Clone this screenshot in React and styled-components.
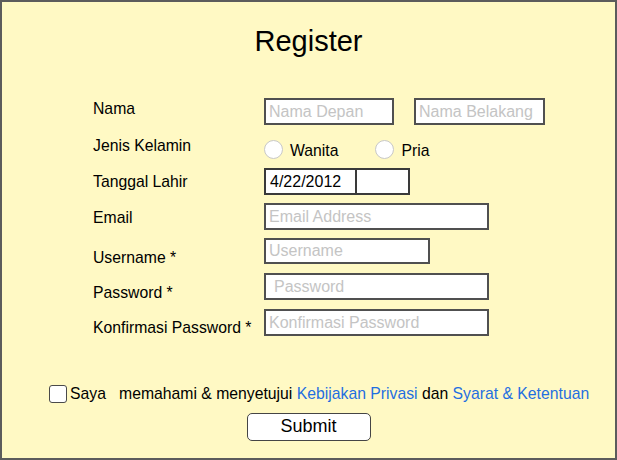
import React from "react";
import styled, { createGlobalStyle } from "styled-components";

const GlobalStyle = createGlobalStyle`
  body {
    margin: 0;
    font-family: "Liberation Sans", Arial, sans-serif;
    color: #000;
  }
`;

function App() {
  return (
    <>
      <GlobalStyle />
      <Frame>
        <Title>Register</Title>
        <Form>
          <LabelCol>
            <Label offset={2}>Nama</Label>
            <Label offset={19}>Jenis Kelamin</Label>
            <Label offset={18}>Tanggal Lahir</Label>
            <Label offset={18}>Email</Label>
            <Label offset={22}>Username *</Label>
            <Label offset={17}>Password *</Label>
            <Label offset={17}>Konfirmasi Password *</Label>
          </LabelCol>
          <ControlCol>
            <NameRow>
              <Field width={130} placeholder="Nama Depan" />
              <Field width={131} placeholder="Nama Belakang" />
            </NameRow>
            <RadioRow>
              <RadioOption>
                <Radio />
                Wanita
              </RadioOption>
              <RadioOption>
                <Radio />
                Pria
              </RadioOption>
            </RadioRow>
            <DateBox>
              <DateValue>4/22/2012</DateValue>
              <DateButton />
            </DateBox>
            <Field gap={8} width={225} placeholder="Email Address" />
            <Field gap={8} width={166} height={26} placeholder="Username" />
            <Field gap={9} width={225} indent={8} placeholder="Password" />
            <Field gap={9} width={225} placeholder="Konfirmasi Password" />
          </ControlCol>
        </Form>
        <Agreement>
          <CheckBox />
          <AgreeText>
            {"Saya   memahami & menyetujui "}
            <Link>Kebijakan Privasi</Link>
            {" dan "}
            <Link>Syarat &amp; Ketentuan</Link>
          </AgreeText>
        </Agreement>
        <SubmitButton>Submit</SubmitButton>
      </Frame>
    </>
  );
}

export default App;

const Frame = styled.div`
  box-sizing: border-box;
  width: 617px;
  height: 460px;
  border: 2px solid #5c5c5c;
  background: #fff9c4;
  display: flex;
  flex-direction: column;
  padding-top: 23px;
`;

const Title = styled.div`
  font-size: 29px;
  line-height: 32px;
  text-align: center;
`;

const Form = styled.div`
  display: flex;
  margin-top: 41px;
  padding-left: 91px;
`;

const LabelCol = styled.div`
  width: 171px;
  display: flex;
  flex-direction: column;
`;

const Label = styled.div`
  margin-top: ${(p) => p.offset}px;
  font-size: 15.75px;
  line-height: 18px;
  white-space: nowrap;
`;

const ControlCol = styled.div`
  display: flex;
  flex-direction: column;
  align-items: flex-start;
`;

const NameRow = styled.div`
  display: flex;
  gap: 20px;
`;

const Field = styled.input`
  box-sizing: border-box;
  margin: ${(p) => p.gap || 0}px 0 0;
  width: ${(p) => p.width}px;
  height: ${(p) => p.height || 27}px;
  border: 2px solid #505050;
  border-radius: 0;
  background: #fff;
  padding: 0 0 0 ${(p) => p.indent || 3}px;
  font-family: "Liberation Sans", Arial, sans-serif;
  font-size: 16px;
  outline: none;

  &::placeholder {
    color: #c4c4c4;
  }
`;

const RadioRow = styled.div`
  display: flex;
  gap: 37px;
  margin-top: 15px;
  height: 19px;
`;

const RadioOption = styled.label`
  display: flex;
  align-items: center;
  gap: 7px;
  font-size: 15.75px;
  line-height: 19px;
  padding-top: 1px;
`;

const Radio = styled.span`
  box-sizing: border-box;
  width: 19px;
  height: 19px;
  margin-top: -1px;
  border-radius: 50%;
  border: 1px solid #c8c8c8;
  background: #fff;
`;

const DateBox = styled.div`
  display: flex;
  margin-top: 9px;
  width: 146px;
  height: 27px;
  box-sizing: border-box;
  border: 2px solid #3a3a3a;
  background: #fff;
`;

const DateValue = styled.div`
  width: 91px;
  padding-left: 4px;
  box-sizing: border-box;
  border-right: 2px solid #3a3a3a;
  font-size: 16px;
  line-height: 23px;
`;

const DateButton = styled.div`
  flex: 1;
`;

const Agreement = styled.div`
  display: flex;
  align-items: center;
  gap: 3px;
  margin-top: 48px;
  padding-left: 47px;
`;

const CheckBox = styled.span`
  box-sizing: border-box;
  width: 18px;
  height: 18px;
  border: 1.5px solid #4a4a4a;
  border-radius: 3px;
  background: #fff;
`;

const AgreeText = styled.div`
  font-size: 15.75px;
  line-height: 18px;
  white-space: pre;
  margin-top: -1px;
`;

const Link = styled.span`
  color: #1f6fe0;
`;

const SubmitButton = styled.button`
  align-self: center;
  box-sizing: border-box;
  margin-top: 10px;
  width: 124px;
  height: 28px;
  border: 1.5px solid #454545;
  border-radius: 5px;
  background: #fff;
  font-family: "Liberation Sans", Arial, sans-serif;
  font-size: 18px;
  color: #000;
  padding: 0 0 2px;
`;
